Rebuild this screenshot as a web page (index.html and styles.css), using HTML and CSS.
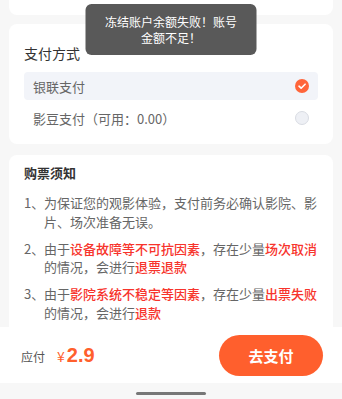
FILE: index.html
```html
<!DOCTYPE html>
<html lang="zh">
<head>
<meta charset="utf-8">
<link rel="stylesheet" href="styles.css">
</head>
<body>
<div class="page">
  <div class="card card-top"></div>
  <div class="card card-pay">
    <div class="pay-title">支付方式</div>
    <div class="pay-row active">
      <span>银联支付</span>
      <span class="radio checked">
        <svg viewBox="0 0 14 14" width="14" height="14"><path d="M4 7.2l2.1 2 4-4" fill="none" stroke="#fff" stroke-width="1.6" stroke-linecap="round" stroke-linejoin="round"/></svg>
      </span>
    </div>
    <div class="pay-row">
      <span>影豆支付（可用：0.00）</span>
      <span class="radio"></span>
    </div>
  </div>
  <div class="card card-notice">
    <div class="notice-title">购票须知</div>
    <div class="notice-item"><span class="num">1、</span><span class="txt">为保证您的观影体验，支付前务必确认影院、影片、场次准备无误。</span></div>
    <div class="notice-item"><span class="num">2、</span><span class="txt">由于<b class="red">设备故障等不可抗因素</b>，存在少量<b class="red">场次取消</b>的情况，会进行<b class="red">退票退款</b></span></div>
    <div class="notice-item"><span class="num">3、</span><span class="txt">由于<b class="red">影院系统不稳定等因素</b>，存在少量<b class="red">出票失败</b>的情况，会进行<b class="red">退款</b></span></div>
  </div>
</div>
<div class="footer">
  <div class="bar">
    <div class="amount">
      <span class="label">应付</span>
      <span class="yen">¥</span><span class="price">2.9</span>
    </div>
    <button class="pay-btn">去支付</button>
  </div>
  <div class="home"><span class="indicator"></span></div>
</div>
<div class="toast">冻结账户余额失败！账号金额不足！</div>
</body>
</html>
```

FILE: styles.css
```css
* { box-sizing: border-box; }
html, body {
  margin: 0;
  padding: 0;
  background: #f7f7f7;
  font-family: "Noto Sans CJK SC", "Noto Sans", sans-serif;
  color: #333;
}
.page {
  padding: 0 9px 80px;
}
.card {
  background: #fff;
  border-radius: 8px;
}
.card-top {
  height: 15px;
  border-radius: 0 0 8px 8px;
}
.card-pay {
  margin-top: 9px;
  padding: 18px 15px 12px;
}
.pay-title {
  font-size: 14px;
  line-height: 22px;
  color: #333;
  margin-bottom: 8px;
}
.pay-row {
  height: 28px;
  padding: 0 9px;
  display: flex;
  align-items: center;
  justify-content: space-between;
  font-size: 13px;
  color: #666;
  border-radius: 4px;
}
.pay-row + .pay-row { margin-top: 4px; }
.pay-row.active { background: #f2f4f9; }
.radio {
  width: 14px;
  height: 14px;
  border-radius: 50%;
  background: #eef0f5;
  border: 1px solid #d9dce3;
  display: flex;
}
.radio.checked {
  background: #ff653a;
  border: none;
}
.card-notice {
  margin-top: 11px;
  padding: 8px 15px 20px;
}
.notice-title {
  font-size: 13px;
  font-weight: bold;
  line-height: 20px;
  color: #333;
  margin-bottom: 11px;
}
.notice-item {
  display: flex;
  font-size: 13px;
  line-height: 18.5px;
  color: #666;
}
.notice-item + .notice-item { margin-top: 8.5px; }
.num { width: 20px; flex: none; }
.txt { flex: 1; }
.red { color: #f7342c; font-weight: 500; }
.footer {
  position: fixed;
  left: 0;
  right: 0;
  bottom: 0;
}
.bar {
  height: 56px;
  background: #fff;
  display: flex;
  align-items: center;
  justify-content: space-between;
  padding: 0 19px 0 21px;
}
.amount {
  display: flex;
  align-items: baseline;
}
.label {
  font-size: 12px;
  color: #555;
  margin-right: 12px;
}
.yen {
  font-size: 14px;
  color: #ff5f2d;
  margin-right: 2px;
}
.price {
  font-family: "Liberation Sans", Arial, sans-serif;
  font-size: 20px;
  font-weight: bold;
  color: #ff5f2d;
}
.pay-btn {
  width: 104px;
  height: 41px;
  border: none;
  border-radius: 21px;
  background: #ff5f2d;
  color: #fff;
  font-family: "Noto Sans CJK SC", sans-serif;
  font-size: 15px;
  font-weight: bold;
  padding: 0;
}
.home {
  height: 16px;
  background: #f7f7f7;
  display: flex;
  justify-content: center;
  align-items: center;
}
.indicator {
  width: 70px;
  height: 3px;
  border-radius: 2px;
  background: #777;
  margin-top: 4px;
}
.toast {
  position: fixed;
  top: 4px;
  left: 50%;
  transform: translateX(-50%);
  width: 171px;
  padding: 10px 19px 9px;
  background: #595959;
  color: #fff;
  font-size: 12px;
  line-height: 16px;
  text-align: center;
  border-radius: 6px;
}
```
